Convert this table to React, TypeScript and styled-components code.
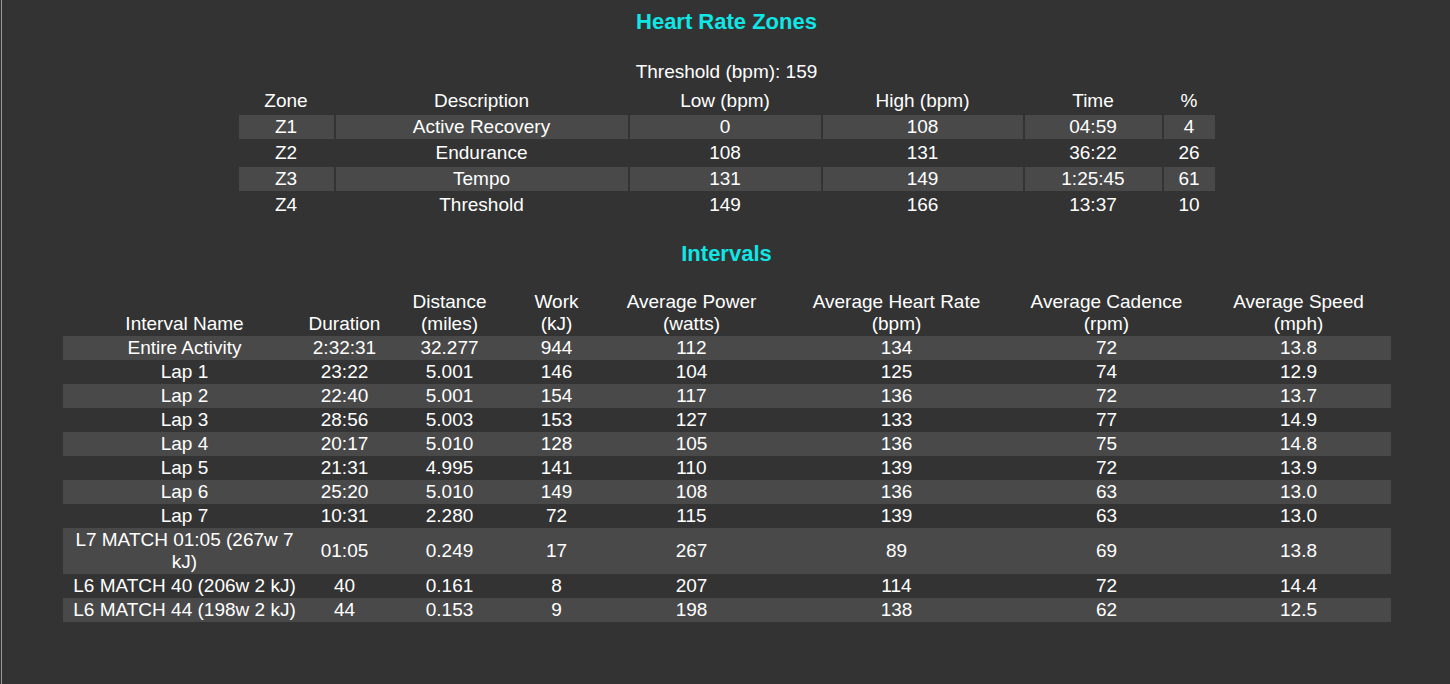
import React from "react";
import styled, { createGlobalStyle } from "styled-components";

const GlobalStyle = createGlobalStyle`
  html, body {
    margin: 0;
    padding: 0;
    background: #333333;
  }
  body {
    font-family: "Liberation Sans", Arial, sans-serif;
    color: #ffffff;
  }
`;

const Page = styled.div`
  min-height: 684px;
  box-sizing: border-box;
  margin-left: 1px;
  border-left: 1px solid #9a9a9a;
  padding-top: 10px;
  padding-left: 1px;
`;

const Title = styled.h2<{ $gap: number }>`
  margin: 0 0 ${(p) => p.$gap}px;
  font-size: 22px;
  line-height: 24px;
  font-weight: bold;
  color: #0fe6e6;
  text-align: center;
`;

const Caption = styled.div`
  font-size: 19px;
  line-height: 22px;
  text-align: center;
  margin-bottom: 4px;
`;

const ZoneTable = styled.table`
  margin: 0 auto 23px;
  border-collapse: separate;
  border-spacing: 2px;
  table-layout: fixed;
  font-size: 19px;
`;

const IntervalTable = styled.table`
  margin: 0 auto;
  border-collapse: collapse;
  table-layout: fixed;
  width: 1328px;
  font-size: 19px;
`;

const Row = styled.tr`
  &:nth-child(odd) td {
    background: #494949;
  }
`;

const Th = styled.th`
  font-weight: normal;
  line-height: 22px;
  padding: 1px 2px;
  text-align: center;
  vertical-align: bottom;
`;

const Td = styled.td`
  line-height: 22px;
  padding: 1px 2px;
  text-align: center;
  vertical-align: middle;
`;

const zoneCols = [95, 292, 191, 200, 137, 51];
const zoneHead = ["Zone", "Description", "Low (bpm)", "High (bpm)", "Time", "%"];
const zones = [
  ["Z1", "Active Recovery", "0", "108", "04:59", "4"],
  ["Z2", "Endurance", "108", "131", "36:22", "26"],
  ["Z3", "Tempo", "131", "149", "1:25:45", "61"],
  ["Z4", "Threshold", "149", "166", "13:37", "10"],
];

const intervalCols = [244, 76, 134, 80, 190, 220, 200, 184];
const intervalHead: [string, string?][] = [
  ["Interval Name"],
  ["Duration"],
  ["Distance", "(miles)"],
  ["Work", "(kJ)"],
  ["Average Power", "(watts)"],
  ["Average Heart Rate", "(bpm)"],
  ["Average Cadence", "(rpm)"],
  ["Average Speed", "(mph)"],
];
const intervals = [
  ["Entire Activity", "2:32:31", "32.277", "944", "112", "134", "72", "13.8"],
  ["Lap 1", "23:22", "5.001", "146", "104", "125", "74", "12.9"],
  ["Lap 2", "22:40", "5.001", "154", "117", "136", "72", "13.7"],
  ["Lap 3", "28:56", "5.003", "153", "127", "133", "77", "14.9"],
  ["Lap 4", "20:17", "5.010", "128", "105", "136", "75", "14.8"],
  ["Lap 5", "21:31", "4.995", "141", "110", "139", "72", "13.9"],
  ["Lap 6", "25:20", "5.010", "149", "108", "136", "63", "13.0"],
  ["Lap 7", "10:31", "2.280", "72", "115", "139", "63", "13.0"],
  ["L7 MATCH 01:05 (267w 7 kJ)", "01:05", "0.249", "17", "267", "89", "69", "13.8"],
  ["L6 MATCH 40 (206w 2 kJ)", "40", "0.161", "8", "207", "114", "72", "14.4"],
  ["L6 MATCH 44 (198w 2 kJ)", "44", "0.153", "9", "198", "138", "62", "12.5"],
];

export default function App() {
  return (
    <>
      <GlobalStyle />
      <Page>
        <Title $gap={27}>Heart Rate Zones</Title>
        <Caption>Threshold (bpm): 159</Caption>
        <ZoneTable>
          <colgroup>
            {zoneCols.map((w, i) => (
              <col key={i} style={{ width: w }} />
            ))}
          </colgroup>
          <thead>
            <tr>
              {zoneHead.map((h) => (
                <Th key={h}>{h}</Th>
              ))}
            </tr>
          </thead>
          <tbody>
            {zones.map((r) => (
              <Row key={r[0]}>
                {r.map((c, i) => (
                  <Td key={i}>{c}</Td>
                ))}
              </Row>
            ))}
          </tbody>
        </ZoneTable>

        <Title $gap={24}>Intervals</Title>
        <IntervalTable>
          <colgroup>
            {intervalCols.map((w, i) => (
              <col key={i} style={{ width: w }} />
            ))}
          </colgroup>
          <thead>
            <tr>
              {intervalHead.map(([a, b]) => (
                <Th key={a}>
                  {b ? (
                    <>
                      {a}
                      <br />
                      {b}
                    </>
                  ) : (
                    a
                  )}
                </Th>
              ))}
            </tr>
          </thead>
          <tbody>
            {intervals.map((r) => (
              <Row key={r[0]}>
                {r.map((c, i) => (
                  <Td key={i}>{c}</Td>
                ))}
              </Row>
            ))}
          </tbody>
        </IntervalTable>
      </Page>
    </>
  );
}
